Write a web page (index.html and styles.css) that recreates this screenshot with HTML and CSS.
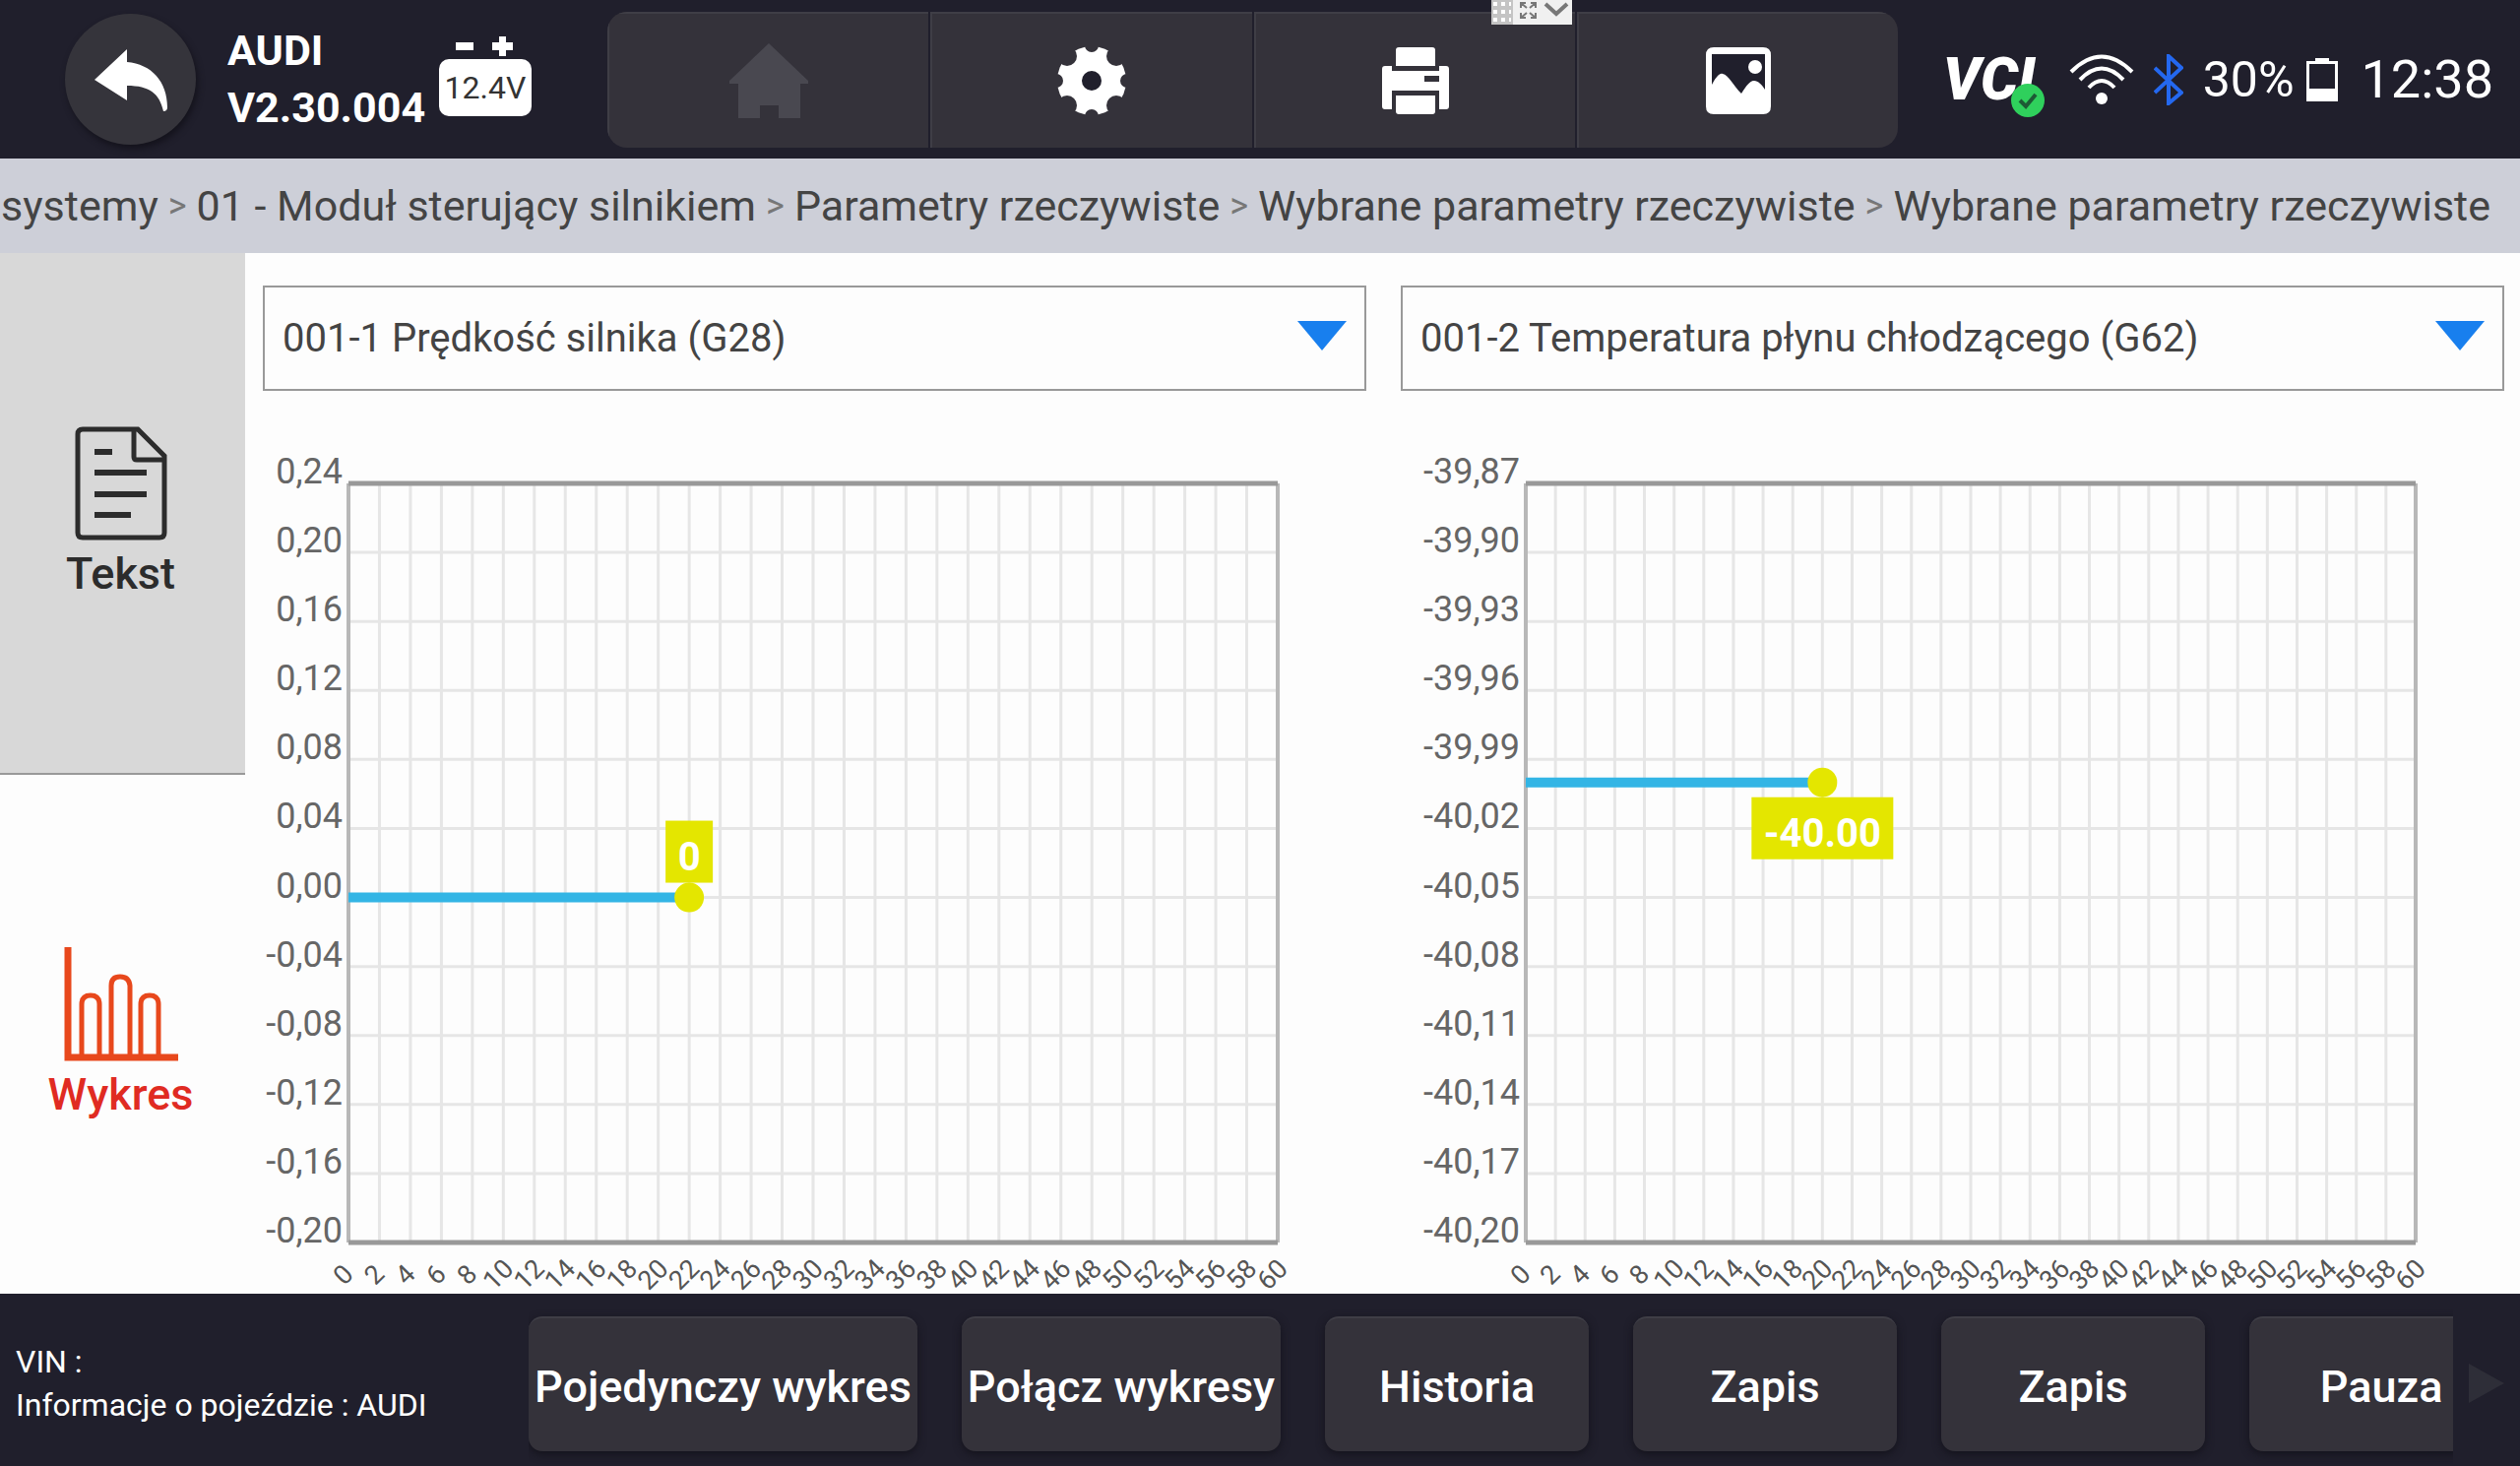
FILE: index.html
```html
<!DOCTYPE html>
<html lang="pl">
  <head>
    <meta charset="utf-8" />
    <title>Parametry rzeczywiste</title>
    <link rel="stylesheet" href="styles.css" />
  </head>
  <body>
    <header class="topbar">
      <div class="vehicle">
        <button class="back" aria-label="Wstecz">
          <svg width="74" height="64" viewBox="0 0 74 64">
            <path d="M0 32 L33 1 V14 C58 16 74 34 74 60 Q74 64 70 64 C66 46 56 38 33 38 V53 Z" />
          </svg>
        </button>
        <div class="version">
          <div>AUDI</div>
          <div>V2.30.004</div>
        </div>
        <div class="voltage">
          <svg width="60" height="20" viewBox="0 0 60 20">
            <path d="M0 6h18v8H0zM37 6h7V0h7v6h7v8h-7v6h-7v-6h-7z" />
          </svg>
          <span class="voltage-value">12.4V</span>
        </div>
      </div>

      <nav class="tools">
        <button class="tool" aria-label="Start" disabled>
          <svg width="80" height="76" viewBox="0 0 80 76">
            <path d="M40 0 L80 38 V41 H72 V76 H50 V63 H31 V76 H9 V41 H0 V38 Z" />
          </svg>
        </button>
        <button class="tool" aria-label="Ustawienia">
          <svg width="72" height="72" viewBox="-36 -36 72 72">
            <mask id="teeth">
              <circle r="36" fill="#fff" />
              <g fill="#000">
                <circle cx="36" r="7" />
                <circle cx="-36" r="7" />
                <circle cy="36" r="7" />
                <circle cy="-36" r="7" />
                <circle cx="25" cy="25" r="10" />
                <circle cx="-25" cy="25" r="10" />
                <circle cx="25" cy="-25" r="10" />
                <circle cx="-25" cy="-25" r="10" />
              </g>
            </mask>
            <circle r="35" mask="url(#teeth)" />
            <circle r="10" fill="#201f2c" />
          </svg>
        </button>
        <button class="tool" aria-label="Drukuj">
          <svg width="68" height="68" viewBox="0 0 68 68">
            <path d="M17 0h34q3 0 3 3v16H14V3q0-3 3-3z" />
            <path fill-rule="evenodd" d="M3 19h7v5h48v-5h7q3 0 3 3v38q0 3-3 3h-7V44H10v19H3q-3 0-3-3V22q0-3 3-3zM43 29v6h15v-6z" />
            <path d="M14 49h40v16q0 3-3 3H17q-3 0-3-3z" />
          </svg>
        </button>
        <button class="tool" aria-label="Galeria">
          <svg width="66" height="68" viewBox="0 0 66 68">
            <path fill="#201f2c" d="M5 5h56v50H5z" />
            <path fill-rule="evenodd" d="M8 0h50q8 0 8 8v52q0 8-8 8H8q-8 0-8-8V8q0-8 8-8zM6 7v31C11 29 14 26 17 27c6 1 11 12 19 20C43 36 46 34 49 34c4 0 8 4 11 9V7z" />
            <circle cx="50" cy="20" r="7" />
          </svg>
        </button>
      </nav>

      <div class="status">
        <div class="vci">
          VCI
          <svg class="vci-ok" width="36" height="36" viewBox="0 0 36 36">
            <circle cx="18" cy="18" r="17" />
            <path d="M10 18l6 6 10-12" />
          </svg>
        </div>
        <svg class="wifi" width="66" height="52" viewBox="0 0 66 52">
          <path d="M2 18Q33-13 64 18M11 26Q33 3 55 26M20 34Q33 20 46 34" />
          <circle cx="33" cy="45" r="6" />
        </svg>
        <svg class="bluetooth" width="30" height="52" viewBox="0 0 30 52">
          <path d="M1 14l27 25-13 11V2l13 12L1 39" />
        </svg>
        <span class="percent">30%</span>
        <svg class="battery" width="32" height="44" viewBox="0 0 32 44">
          <path fill-rule="evenodd" d="M9 0h14v3h9v41H0V3h9zM3 6v25h26V6z" />
        </svg>
        <span class="clock">12:38</span>
      </div>
    </header>

    <!-- remote session handle -->
    <div class="handle">
      <svg width="82" height="25" viewBox="0 0 82 25">
        <path fill="#c4c4c4" d="M0 0h22v25H0z" />
        <path fill="none" stroke="#fff" stroke-width="4" stroke-dasharray="4 4" d="M2 4h18M2 12h18M2 20h18" />
        <path fill="none" stroke="#777" stroke-width="2" d="M30 8V3h5M40 3h5v5M45 13v5h-5M35 18h-5v-5M30 3l6 5M45 3l-6 5M45 18l-6-5M30 18l6-5" />
        <path fill="none" stroke="#777" stroke-width="4" d="M55 4l11 10L77 4" />
      </svg>
    </div>

    <nav class="breadcrumb">
      <a href="#">systemy</a>
      <span>&gt;</span>
      <a href="#">01 - Moduł sterujący silnikiem</a>
      <span>&gt;</span>
      <a href="#">Parametry rzeczywiste</a>
      <span>&gt;</span>
      <a href="#">Wybrane parametry rzeczywiste</a>
      <span>&gt;</span>
      <a href="#">Wybrane parametry rzeczywiste</a>
    </nav>

    <main class="content">
      <aside class="sidebar">
        <button class="tab">
          <svg width="94" height="116" viewBox="0 0 94 116">
            <path d="M8 3H64L91 30V108Q91 113 86 113H8Q3 113 3 108V8Q3 3 8 3ZM60 3V31Q60 34 63 34H91" />
            <path stroke-width="6" stroke-linecap="butt" d="M20 26h18M20 47h53M20 69h53M20 90h37" />
          </svg>
          Tekst
        </button>
        <button class="tab active">
          <svg width="116" height="116" viewBox="0 0 116 116">
            <path stroke-width="7" d="M4 0V112H116" />
            <path d="M18 112V58Q18 49 27 49T36 58V112M48 112V39Q48 30 57 30T67 39V112M78 112V58Q78 49 87 49T96 58V112" />
          </svg>
          Wykres
        </button>
      </aside>

      <section class="charts">
        <div class="chart">
          <select class="parameter" aria-label="Parametr 1">
            <option>001-1 Prędkość silnika (G28)</option>
          </select>
          <div class="plot">
            <svg id="rpm"></svg>
          </div>
        </div>
        <div class="chart">
          <select class="parameter" aria-label="Parametr 2">
            <option>001-2 Temperatura płynu chłodzącego (G62)</option>
          </select>
          <div class="plot wide-labels">
            <svg id="temperature"></svg>
          </div>
        </div>
      </section>
    </main>

    <footer class="bottombar">
      <div class="info">
        <div>VIN :</div>
        <div>Informacje o pojeździe : AUDI</div>
      </div>
      <div class="actions">
        <button>Pojedynczy wykres</button>
        <button>Połącz wykresy</button>
        <button>Historia</button>
        <button>Zapis</button>
        <button>Zapis</button>
        <button>Pauza</button>
      </div>
      <button class="next" aria-label="Dalej">
        <svg width="36" height="40" viewBox="0 0 36 40">
          <path d="M0 0l36 20L0 40z" />
        </svg>
      </button>
    </footer>

    <script src="charts.js"></script>
  </body>
</html>
```

FILE: styles.css
```css
* {
  box-sizing: border-box;
}

body {
  display: flex;
  flex-direction: column;
  height: 100vh;
  margin: 0;
  overflow: hidden;
  background: #fdfdfd;
  font-family: Roboto, sans-serif;
}

button {
  margin: 0;
  padding: 0;
  border: none;
  font-family: inherit;
  color: inherit;
}

svg {
  display: block;
  flex: none;
}

/* top bar */
.topbar {
  display: grid;
  grid-template-columns: 617px 1fr 632px;
  align-items: center;
  flex: none;
  height: 161px;
  background: #201f2c;
  color: #fff;
  fill: #fff;
}

.vehicle {
  display: flex;
  align-items: center;
  padding-left: 66px;
}

.back {
  display: flex;
  justify-content: center;
  align-items: center;
  width: 133px;
  height: 133px;
  margin-right: 32px;
  border-radius: 50%;
  background: #35343b;
  box-shadow: 2px 4px 6px #14131c;
}

.version {
  width: 215px;
  padding-bottom: 2px;
  font-size: 43px;
  font-weight: 700;
  line-height: 58px;
}

.voltage {
  display: flex;
  flex-direction: column;
  align-items: center;
  gap: 3px;
  padding-bottom: 6px;
}

.voltage-value {
  width: 94px;
  border-radius: 10px;
  background: #fff;
  color: #333;
  font-size: 32px;
  line-height: 58px;
  text-align: center;
}

.tools {
  display: flex;
  gap: 2px;
  height: 138px;
  border-radius: 20px;
  overflow: hidden;
}

.tool {
  display: flex;
  justify-content: center;
  align-items: center;
  flex: 1;
  border-top: 2px solid #3f3e46;
  border-left: 2px solid #3f3e46;
  background: #34323a;
  fill: #fff;
}

.tool:disabled {
  fill: #494850;
}

.status {
  display: flex;
  align-items: center;
  justify-content: flex-end;
  padding-right: 27px;
}

.vci {
  position: relative;
  margin-right: 34px;
  font-size: 60px;
  font-style: italic;
  font-weight: 900;
}

.vci-ok {
  position: absolute;
  right: -10px;
  bottom: -4px;
  fill: #2fd05c;
}

.vci-ok path {
  fill: none;
  stroke: #1d5a35;
  stroke-width: 4;
}

.wifi {
  margin-right: 20px;
}

.wifi path {
  fill: none;
  stroke: #fff;
  stroke-width: 4;
}

.bluetooth {
  margin-right: 20px;
  fill: none;
  stroke: #2468f0;
  stroke-width: 4;
}

.percent {
  margin-right: 12px;
  font-size: 50px;
}

.battery {
  margin-right: 24px;
}

.clock {
  font-size: 54px;
}

.handle {
  position: absolute;
  top: 0;
  left: 1515px;
  background: #f0f0f0;
}

/* breadcrumb */
.breadcrumb {
  display: flex;
  justify-content: flex-end;
  align-items: center;
  flex: none;
  gap: 10px;
  height: 96px;
  padding-right: 30px;
  overflow: hidden;
  background: #cdcfd8;
  color: #777;
  font-size: 36px;
  white-space: nowrap;
}

.breadcrumb a {
  color: #444;
  font-size: 43px;
  text-decoration: none;
}

/* content */
.content {
  display: flex;
  flex: 1;
  min-height: 0;
}

.sidebar {
  display: flex;
  flex-direction: column;
  flex: none;
  width: 249px;
}

.tab {
  display: flex;
  flex-direction: column;
  justify-content: center;
  align-items: center;
  flex: 1;
  gap: 8px;
  padding-right: 4px;
  border-bottom: 2px solid #999;
  background: #d8d8d8;
  color: #2c2c2c;
  font-size: 45px;
  font-weight: 500;
  line-height: 52px;
}

.tab svg {
  fill: none;
  stroke: #2c2c2c;
  stroke-width: 5;
}

.tab.active {
  border: none;
  background: #fdfdfd;
  color: #e02b22;
}

.tab.active svg {
  stroke: #e8481c;
}

.charts {
  display: grid;
  grid-template-columns: 1fr 1fr;
  flex: 1;
  gap: 35px;
  padding: 33px 16px 0 18px;
}

.chart {
  display: flex;
  flex-direction: column;
}

.parameter {
  width: 100%;
  height: 107px;
  padding: 0 18px;
  appearance: none;
  border: 2px solid #999;
  border-radius: 0;
  background: #fdfdfd url("data:image/svg+xml,%3Csvg xmlns='http://www.w3.org/2000/svg' width='50' height='30'%3E%3Cpath fill='%23187fee' d='M0 0h50L25 30z'/%3E%3C/svg%3E") no-repeat right 18px top 34px;
  color: #444;
  font-family: inherit;
  font-size: 40px;
}

.plot {
  flex: 1;
  margin: 94px 90px 52px 87px;
}

.plot.wide-labels {
  margin-left: 127px;
}

.plot svg {
  width: 100%;
  height: 100%;
  overflow: visible;
}

.plot .grid {
  stroke: #e6e6e6;
  stroke-width: 3;
}

.plot .side {
  stroke: #b8b8b8;
  stroke-width: 4;
}

.plot .edge {
  stroke: #999;
  stroke-width: 5;
}

.plot .y-label {
  fill: #666;
  font-size: 36px;
  text-anchor: end;
}

.plot .x-label {
  fill: #555;
  font-size: 27px;
  text-anchor: middle;
}

.plot .series {
  stroke: #33b5e5;
  stroke-width: 10;
}

.plot .marker {
  fill: #e4e600;
}

.plot .marker-label {
  fill: #fff;
  font-size: 40px;
  font-weight: 700;
  text-anchor: middle;
}

/* bottom bar */
.bottombar {
  display: flex;
  align-items: center;
  flex: none;
  height: 175px;
  background: #201f2c;
  color: #fff;
}

.info {
  flex: none;
  width: 537px;
  padding: 6px 0 0 16px;
  font-size: 32px;
  line-height: 44px;
}

.actions {
  display: flex;
  flex: 1;
  gap: 45px;
  min-width: 0;
  height: 175px;
  padding: 23px 0 15px;
  overflow: hidden;
}

.actions button {
  flex: none;
  min-width: 268px;
  padding: 4px 6px 0;
  border-top: 2px solid #3f3e46;
  border-radius: 14px;
  background: #34323a;
  box-shadow: 0 3px 8px #14131c;
  font-size: 45px;
  font-weight: 500;
}

.next {
  margin: 6px 16px 0;
  background: none;
  fill: #2e2e38;
}
```

FILE: charts.js
```js
const SVG = "http://www.w3.org/2000/svg";

function add(parent, tag, attrs, text) {
  const el = document.createElementNS(SVG, tag);
  for (const key in attrs) el.setAttribute(key, attrs[key]);
  if (text !== undefined) el.textContent = text;
  parent.append(el);
  return el;
}

function line(parent, cls, x1, y1, x2, y2) {
  add(parent, "line", {
    class: cls,
    x1: x1 + "%",
    y1: y1 + "%",
    x2: x2 + "%",
    y2: y2 + "%",
  });
}

function drawChart(id, { max, step, time, value, label, boxWidth, boxTop }) {
  const svg = document.getElementById(id);
  const rows = 11;
  const x = (t) => (t / 60) * 100;
  const y = (v) => ((max - v) / (step * rows)) * 100;

  for (let t = 2; t < 60; t += 2) line(svg, "grid", x(t), 0, x(t), 100);
  for (let i = 1; i < rows; i++) {
    line(svg, "grid", 0, (i / rows) * 100, 100, (i / rows) * 100);
  }
  line(svg, "side", 0, 0, 0, 100);
  line(svg, "side", 100, 0, 100, 100);
  line(svg, "edge", 0, 0, 100, 0);
  line(svg, "edge", 0, 100, 100, 100);

  // y axis
  for (let i = 0; i <= rows; i++) {
    let text = (max - i * step).toFixed(2).replace(".", ",");
    if (text === "-0,00") text = "0,00";
    add(svg, "text", { class: "y-label", x: -6, y: (i / rows) * 100 + "%" }, text);
  }

  // x axis
  for (let t = 0; t <= 60; t += 2) {
    const tick = add(svg, "svg", { x: x(t) + "%", y: "100%", width: 1, height: 1 });
    add(
      tick,
      "text",
      { class: "x-label", transform: "translate(-6 32) rotate(-45)", y: 10 },
      t
    );
  }

  // data
  line(svg, "series", 0, y(value), x(time), y(value));
  const point = add(svg, "svg", {
    x: x(time) + "%",
    y: y(value) + "%",
    width: 1,
    height: 1,
  });
  add(point, "circle", { class: "marker", r: 15 });
  add(point, "rect", {
    class: "marker",
    x: -boxWidth / 2,
    y: boxTop,
    width: boxWidth,
    height: 63,
  });
  add(point, "text", { class: "marker-label", y: boxTop + 50 }, label);
}

drawChart("rpm", {
  max: 0.24,
  step: 0.04,
  time: 22,
  value: 0,
  label: "0",
  boxWidth: 48,
  boxTop: -78,
});

drawChart("temperature", {
  max: -39.87,
  step: 0.03,
  time: 20,
  value: -40,
  label: "-40.00",
  boxWidth: 144,
  boxTop: 15,
});
```
